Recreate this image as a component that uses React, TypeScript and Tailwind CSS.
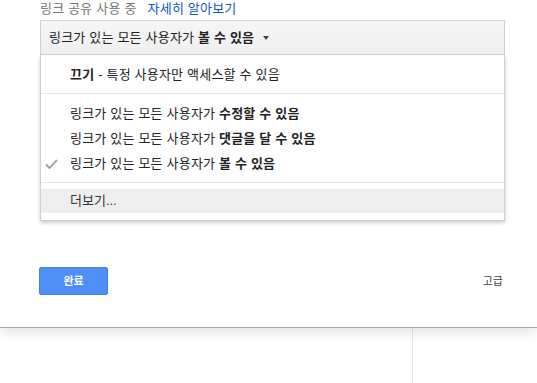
import React from 'react';

const font = { fontFamily: '"Liberation Sans", "Noto Sans CJK KR", sans-serif' };

const Check = () => (
    <svg width="13" height="10" viewBox="0 0 13 10" className="absolute left-[4px] top-[8px]">
        <path d="M1 5.5 L4.5 9 L12 1" fill="none" stroke="#999" strokeWidth="1.8" />
    </svg>
);

const Item = ({ label, strong, checked }: { label: string; strong: string; checked?: boolean }) => (
    <div className="relative h-[25px] flex items-center pl-[29px] text-[13px] tracking-[0.2px] text-[#222]">
        {checked && <Check />}
        <span>{label} <b className="font-bold">{strong}</b></span>
    </div>
);

export default function App() {
    return (
        <div className="w-[537px] h-[383px] bg-white overflow-hidden relative" style={font}>
            <div className="h-[328px] border-b border-[#a8a8a8] px-[40px] relative z-10 bg-white shadow-[0_4px_12px_rgba(0,0,0,0.12)]">
                <div className="h-[16px] flex items-center text-[13px] tracking-[0.2px] leading-none">
                    <span className="text-[#777]">링크 공유 사용 중</span>
                    <a className="ml-[11px] text-[#1155cc]">자세히 알아보기</a>
                </div>

                <div className="relative mt-[4px] w-[465px]">
                    <div className="h-[35px] flex items-center pl-[8px] border border-[#d0d0d0] bg-gradient-to-b from-[#f6f6f6] to-[#efefef] text-[13px] tracking-[0.2px] text-[#222]">
                        <span>링크가 있는 모든 사용자가 <b className="font-bold">볼 수 있음</b></span>
                        <span className="ml-[9px] w-0 h-0 border-l-[3px] border-r-[3px] border-t-[4px] border-l-transparent border-r-transparent border-t-[#444]" />
                    </div>

                    <div className="absolute left-0 top-[35px] w-[465px] bg-white border border-t-0 border-[#cfcfcf] shadow-[0_2px_4px_rgba(0,0,0,0.2)] pt-[7px] pb-[7px]">
                        <div className="h-[25px] flex items-center pl-[29px] text-[13px] tracking-[0.2px] text-[#222]">
                            <span><b className="font-bold">끄기</b> - 특정 사용자만 액세스할 수 있음</span>
                        </div>
                        <div className="mt-[6px] mb-[7px] h-px bg-[#e5e5e5]" />
                        <Item label="링크가 있는 모든 사용자가" strong="수정할 수 있음" />
                        <Item label="링크가 있는 모든 사용자가" strong="댓글을 달 수 있음" />
                        <Item label="링크가 있는 모든 사용자가" strong="볼 수 있음" checked />
                        <div className="mt-[6px] mb-[6px] h-px bg-[#e5e5e5]" />
                        <div className="h-[24px] flex items-center pl-[29px] bg-[#eeeeee] text-[13px] text-[#333]">
                            더보기...
                        </div>
                    </div>
                </div>

                <div className="absolute left-[39px] right-[34px] top-[267px] flex items-center justify-between">
                    <button className="w-[69px] h-[28px] rounded-[2px] bg-[#4d8ef7] border border-[#3f82ef] text-white text-[11px] font-bold">
                        완료
                    </button>
                    <span className="text-[11px] text-[#444]">고급</span>
                </div>
            </div>

            <div className="flex h-[55px]">
                <div className="w-[413px] border-r border-[#e8e8e8]" />
            </div>
        </div>
    );
}
